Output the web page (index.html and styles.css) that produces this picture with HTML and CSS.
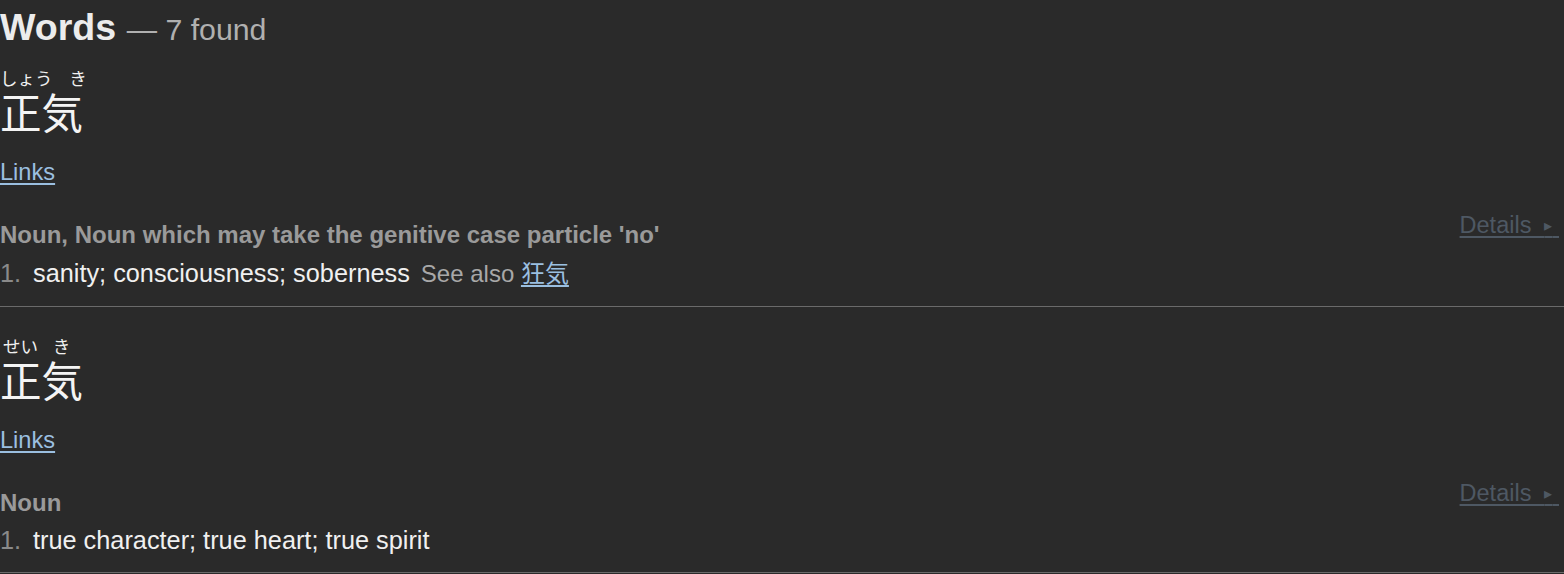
FILE: index.html
```html
<!DOCTYPE html>
<html lang="en">
<head>
<meta charset="utf-8">
<title>Words</title>
<link rel="stylesheet" href="styles.css">
</head>
<body>
<h4 class="title">Words <span class="count">— 7 found</span></h4>

<div class="entry">
  <div class="rep">
    <div class="furigana"><span class="kana wide">しょう</span><span class="kana">き</span></div>
    <div class="kanji">正気</div>
    <a class="links" href="#">Links</a>
  </div>
  <div class="body">
    <div class="senses">
      <div class="tags">Noun, Noun which may take the genitive case particle 'no'</div>
      <div class="meaning"><span class="num">1.</span><span class="def">sanity; consciousness; soberness</span><span class="supp">See also <a href="#">狂気</a></span></div>
    </div>
    <a class="details" href="#">Details&nbsp;&nbsp;<span class="tri">▸</span>&nbsp;</a>
  </div>
</div>

<div class="entry">
  <div class="rep">
    <div class="furigana"><span class="kana">せい</span><span class="kana">き</span></div>
    <div class="kanji">正気</div>
    <a class="links" href="#">Links</a>
  </div>
  <div class="body">
    <div class="senses">
      <div class="tags">Noun</div>
      <div class="meaning"><span class="num">1.</span><span class="def">true character; true heart; true spirit</span></div>
    </div>
    <a class="details" href="#">Details&nbsp;&nbsp;<span class="tri">▸</span>&nbsp;</a>
  </div>
</div>
</body>
</html>
```

FILE: styles.css
```css
html, body {
  margin: 0;
  padding: 0;
  background: #2a2a2a;
}
body {
  font-family: "Liberation Sans", Arial, "Noto Sans CJK JP", sans-serif;
  color: #e8e8e8;
}
.title {
  margin: 6px 0 0;
  font-size: 37.6px;
  line-height: 42px;
  font-weight: bold;
  color: #ececec;
}
.count {
  font-size: 30.3px;
  font-weight: normal;
  color: #b0b0b0;
}
.entry {
  border-bottom: 1px solid #6a6a6a;
  padding-top: 29px;
  padding-bottom: 17px;
}
.entry:first-of-type {
  padding-top: 17px;
}
.furigana {
  display: flex;
  font-family: "Noto Sans CJK JP", sans-serif;
  font-size: 17.5px;
  line-height: 20px;
  color: #f0f0f0;
}
.kana {
  display: inline-block;
  min-width: 41px;
  text-align: center;
}
.kana.wide {
  margin-right: 5px;
}
.kanji {
  font-family: "Noto Sans CJK JP", sans-serif;
  font-size: 41.5px;
  line-height: 44px;
  color: #f4f4f4;
  margin-top: 1px;
}
.links {
  display: inline-block;
  margin-top: 26px;
  font-size: 23.6px;
  line-height: 27px;
  color: #9bbfe0;
  text-decoration: underline;
  text-underline-offset: 3px;
}
.body {
  display: flex;
  align-items: flex-start;
  justify-content: space-between;
  margin-top: 26px;
}
.senses {
  padding-top: 9px;
}
.tags {
  font-size: 24px;
  line-height: 28px;
  font-weight: bold;
  color: #9a9a9a;
}
.meaning {
  margin-top: 8px;
  display: flex;
  align-items: baseline;
  font-size: 25.3px;
  line-height: 30px;
}
.num {
  width: 33px;
  color: #8a8a8a;
}
.def {
  color: #f0f0f0;
}
.supp {
  margin-left: 11px;
  font-size: 24px;
  color: #a8a8a8;
}
.supp a {
  font-family: "Noto Sans CJK JP", sans-serif;
  color: #9bbfe0;
  text-decoration: underline;
  text-underline-offset: 3px;
}
.details {
  margin: 0 5px 0 0;
  font-size: 23.5px;
  line-height: 27px;
  color: #4e5863;
  text-decoration: underline;
  text-underline-offset: 3px;
  white-space: nowrap;
}
.tri {
  font-size: 16px;
  vertical-align: 2px;
}
```
